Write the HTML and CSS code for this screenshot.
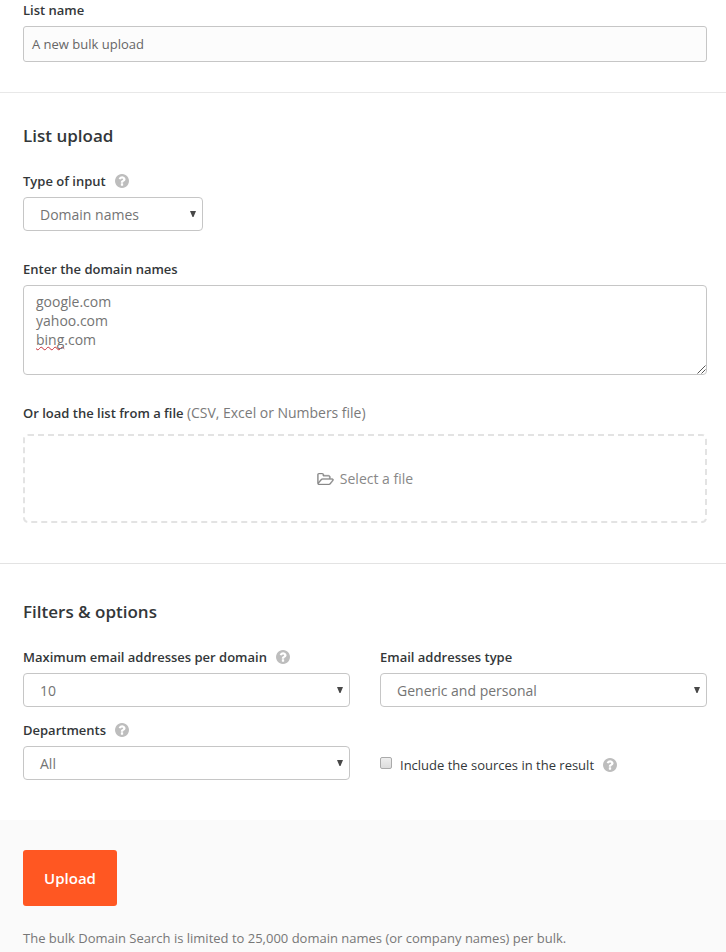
FILE: index.html
```
<!DOCTYPE html>
<html lang="en">
<head>
<meta charset="utf-8">
<title>Bulk domain search</title>
<link rel="stylesheet" href="styles.css">
</head>
<body>
<svg class="defs" width="0" height="0" aria-hidden="true">
  <symbol id="help" viewBox="128 128 1536 1536"><path d="M1024 1376v-192q0-14-9-23t-23-9H800q-14 0-23 9t-9 23v192q0 14 9 23t23 9h192q14 0 23-9t9-23zm256-672q0-88-55.500-163T1086 425t-170-41q-243 0-371 213-15 24 8 42l132 100q7 6 19 6 16 0 25-12 53-68 86-92 34-24 86-24 48 0 85.500 26t37.500 59q0 38-20 61t-68 45q-63 28-115.500 86.500T768 1020v36q0 14 9 23t23 9h192q14 0 23-9t9-23q0-19 21.500-49.500T1100 957q32-18 49-28.500t46-35 44.500-48 28-60.500 12.500-81zm384 192q0 209-103 385.500T1281.500 1561 896 1664t-385.500-103T231 1281.500 128 896t103-385.500T510.500 231 896 128t385.500 103T1561 510.500 1664 896z"/></symbol>
  <symbol id="caret" viewBox="0 0 6 6"><path d="M0 0h6L3.500 6h-1z"/></symbol>
</svg>
<main>
  <section class="section section-name">
    <div class="label">List name</div>
    <div class="input">A new bulk upload</div>
  </section>

  <section class="section section-upload">
    <h2 class="heading">List upload</h2>
    <div class="label"><span>Type of input</span><svg class="help"><use href="#help"/></svg></div>
    <div class="select select-small"><span>Domain names</span><svg class="caret"><use href="#caret"/></svg></div>
    <div class="label label-domains">Enter the domain names</div>
    <div class="textarea">
      <div>google.com</div>
      <div>yahoo.com</div>
      <div><span class="misspelled">bing</span>.com</div>
      <svg class="resizer" viewBox="0 0 9 9"><path d="M.5 8.500l8-8M4.500 8.500l4-4"/></svg>
    </div>
    <div class="label label-file"><span>Or load the list from a file <span class="hint">(CSV, Excel or Numbers file)</span></span></div>
    <div class="dropzone">
      <svg class="dash" width="684" height="89"><rect x="1" y="1" width="682" height="87" rx="4"/></svg>
      <svg class="folder" viewBox="0 256 1920 1408"><path d="M1781 1061q0-35-53-35H640q-40 0-85.500 21.500T484 1100l-294 363q-18 24-18 40 0 35 53 35h1088q40 0 86-22t71-53l294-363q18-22 18-39zM640 896h768V736q0-40-28-68t-68-28H736q-40 0-68-28t-28-68v-64q0-40-28-68t-68-28H224q-40 0-68 28t-28 68v853l256-315q44-53 116-87.500T640 896zm1269 163q0 62-46 120l-295 363q-43 53-116 87.500t-140 34.500H224q-92 0-158-66T0 1440V480q0-92 66-158t158-66h320q92 0 158 66t66 158v32h544q92 0 158 66t66 158v160h192q54 0 99 24.500t67 70.500q15 32 15 68z"/></svg>
      <span>Select a file</span>
    </div>
  </section>

  <section class="section section-filters">
    <h2 class="heading">Filters &amp; options</h2>
    <div class="grid">
      <div>
        <div class="label"><span>Maximum email addresses per domain</span><svg class="help"><use href="#help"/></svg></div>
        <div class="select"><span>10</span><svg class="caret"><use href="#caret"/></svg></div>
      </div>
      <div>
        <div class="label">Email addresses type</div>
        <div class="select"><span>Generic and personal</span><svg class="caret"><use href="#caret"/></svg></div>
      </div>
      <div>
        <div class="label"><span>Departments</span><svg class="help"><use href="#help"/></svg></div>
        <div class="select"><span>All</span><svg class="caret"><use href="#caret"/></svg></div>
      </div>
      <div class="check">
        <span class="box"></span><span>Include the sources in the result</span><svg class="help"><use href="#help"/></svg>
      </div>
    </div>
  </section>

  <footer class="footer">
    <button class="button" type="button">Upload</button>
    <p class="note">The bulk Domain Search is limited to 25,000 domain names (or company names) per bulk.</p>
  </footer>
</main>
</body>
</html>
```
FILE: styles.css
```
* { box-sizing: border-box; }
body {
  margin: 0;
  background: #fff;
  color: #333739;
  font-family: "Open Sans", sans-serif;
  font-size: 13px;
  line-height: 20px;
}
main { height: 952px; overflow: hidden; }
.defs { display: block; }
.section { padding: 0 19px 0 23px; }
.section-name { height: 93px; border-bottom: 1px solid #e8e8e8; }
.section-upload { height: 471px; padding-top: 31px; border-bottom: 1px solid #e3e3e3; }
.section-filters { height: 256px; padding-top: 36px; }
.heading { margin: 0; font-size: 17px; font-weight: 600; line-height: 24px; }
.heading + .label, .grid { margin-top: 23px; }
.label {
  display: flex;
  align-items: center;
  height: 20px;
  font-weight: 600;
}
.hint { font-weight: 400; font-size: 14px; letter-spacing: -0.02px; color: #7a7a7a; }
.help { width: 14px; height: 14px; margin-left: 9px; fill: #bdbdbd; }
.input {
  height: 36px;
  margin-top: 6px;
  padding: 7px 8px;
  border: 1px solid #c6c6c6;
  border-radius: 3px;
  background: #fcfcfc;
  color: #666;
}
.select {
  display: flex;
  align-items: center;
  justify-content: space-between;
  height: 34px;
  margin-top: 6px;
  padding: 1px 6px 0 16px;
  border: 1px solid #c6c6c6;
  border-radius: 4px;
  color: #747474;
  font-size: 14px;
}
.select-small { width: 180px; }
.caret { width: 6px; height: 6px; margin-top: -2px; fill: #484848; }
.label-domains { margin-top: 28px; }
.textarea {
  position: relative;
  height: 90px;
  margin-top: 6px;
  padding: 6px 12px;
  border: 1px solid #c6c6c6;
  border-radius: 4px;
  color: #747474;
  font-size: 14px;
  line-height: 19px;
}
.misspelled { text-decoration: underline wavy #c8303a 1px; text-underline-offset: 1px; text-decoration-skip-ink: none; }
.resizer { position: absolute; right: 0; bottom: 0; width: 9px; height: 9px; fill: none; stroke: #555; }
.label-file { margin-top: 28px; }
.dropzone {
  position: relative;
  display: flex;
  align-items: center;
  justify-content: center;
  gap: 6px;
  height: 89px;
  margin-top: 11px;
  color: #888;
  font-size: 14px;
}
.dash { position: absolute; inset: 0; fill: none; stroke: #e3e3e3; stroke-width: 2; stroke-dasharray: 6 4; }
.folder { width: 17px; height: 12px; fill: #888; stroke: #888; stroke-width: 40; }
.grid { display: grid; grid-template-columns: 327px 327px; gap: 13px 30px; }
.check { display: flex; align-items: center; height: 20px; margin-top: 35px; margin-bottom: -6px; }
.box {
  width: 12px;
  height: 12px;
  margin: -4px 8px 0 0;
  border: 1px solid #aaa;
  border-radius: 2px;
  background: linear-gradient(#eee, #dcdcdc);
}
.footer { height: 132px; padding: 30px 23px 0; background: #fafafa; }
.button {
  display: block;
  width: 94px;
  height: 56px;
  padding: 0;
  border: 0;
  border-radius: 3px;
  background: #ff5722;
  color: #fff;
  font: 600 15px/20px "Open Sans", sans-serif;
}
.note { margin: 22px 0 0; color: #777; white-space: nowrap; }
```
